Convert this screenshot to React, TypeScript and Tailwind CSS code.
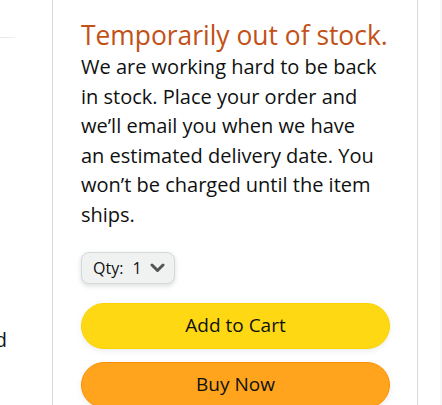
import React from "react";

export default function App() {
  const font = { fontFamily: '"Open Sans", "Noto Sans", Arial, sans-serif' };
  const lines = [
    "We are working hard to be back",
    "in stock. Place your order and",
    "we’ll email you when we have",
    "an estimated delivery date. You",
    "won’t be charged until the item",
    "ships.",
  ];
  return (
    <div
      className="w-[442px] h-[405px] overflow-hidden bg-white flex text-[#0F1111]"
      style={font}
    >
      {/* left cut-off column */}
      <div className="w-[52px] shrink-0 flex flex-col overflow-hidden">
        <div className="mt-[37px] h-px w-[15px] bg-gradient-to-r from-[#e3e6e6] to-[#f3f3f3]" />
        <div className="mt-[287px] -ml-[5px] text-[19.5px] leading-[29.6px] whitespace-nowrap">
          d
        </div>
      </div>

      {/* buy box card */}
      <div className="w-[366px] shrink-0 border-l border-r border-[#D5D9D9] pl-[28px] pr-[26px]">
        <div className="pt-[19px] text-[26.4px] leading-[32px] text-[#C25118] whitespace-nowrap">
          Temporarily out of stock.
        </div>
        <p className="mt-[1px] text-[20px] leading-[29.6px]">
          {lines.map((l, i) => (
            <span key={i} className="block whitespace-nowrap">
              {l}
            </span>
          ))}
        </p>

        <button className="mt-[22px] h-[32px] w-[94px] rounded-[8px] border border-[#D5D9D9] bg-[#F0F2F2] shadow-[0_2px_5px_0_rgba(15,17,17,0.15)] flex items-center pl-[11px] text-[16px] text-[#0F1111]">
          <span>Qty:</span>
          <span className="ml-[9px]">1</span>
          <svg
            width="15"
            height="10"
            viewBox="0 0 15 10"
            className="ml-[8px]"
            fill="none"
          >
            <path
              d="M2 2 L7.5 7.5 L13 2"
              stroke="#555"
              strokeWidth="3"
              strokeLinecap="round"
              strokeLinejoin="round"
            />
          </svg>
        </button>

        <button className="mt-[19px] w-[309px] h-[46px] rounded-full bg-[#FFD814] border border-[#FCD200] shadow-[0_2px_5px_0_rgba(213,217,217,0.5)] flex items-center justify-center text-[19px] text-[#0F1111]">
          Add to Cart
        </button>
        <button className="mt-[13px] w-[309px] h-[46px] rounded-full bg-[#FFA41C] border border-[#FF8F00] shadow-[0_2px_5px_0_rgba(213,217,217,0.5)] flex items-center justify-center text-[19px] text-[#0F1111]">
          Buy Now
        </button>
      </div>

      <div className="w-[22px] shrink-0" />
      <div className="w-[2px] shrink-0 bg-[#f7f7f7]" />
    </div>
  );
}
